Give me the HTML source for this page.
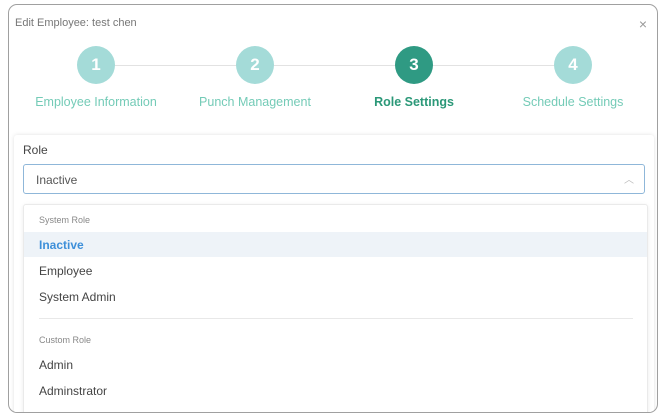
<!DOCTYPE html>
<html><head><style>
*{margin:0;padding:0;box-sizing:border-box}
body{width:667px;height:418px;background:#fff;font-family:"Liberation Sans",sans-serif;position:relative;overflow:hidden}
.dlg{position:absolute;left:8px;top:4px;width:650px;height:409px;border:1.5px solid #a0a0a0;border-radius:9px;background:#fff;overflow:hidden}
.t{position:absolute;left:6px;top:12px;font-size:11px;color:#777}
.x{position:absolute;right:10px;top:11px;font-size:14px;color:#999}
.line{position:absolute;top:60px;height:1px;background:#e2e2e2}
.c{position:absolute;top:41px;width:38px;height:38px;border-radius:50%;background:#a4dbd8;color:#fff;font-size:17px;font-weight:bold;text-align:center;line-height:38px}
.c.a{background:#2f9a83}
.l{position:absolute;top:90px;width:160px;text-align:center;font-size:12.5px;color:#74cbb7}
.l.a{color:#2b9878;font-weight:bold}
.card{position:absolute;left:5px;top:130px;width:640px;height:290px;background:#fff;box-shadow:0 0 4px rgba(0,0,0,.12);border-radius:3px}
.role{position:absolute;left:14px;top:138px;font-size:12px;color:#444}
.inp{position:absolute;left:14px;top:159px;width:622px;height:30px;border:1px solid #8fb7d9;border-radius:3px;font-size:12px;color:#555;padding:8px 12px}
.inp span{position:absolute;right:10px;top:6px;color:#bbb;font-size:10px}
.dd{position:absolute;left:14px;top:199px;width:625px;height:220px;background:#fff;border:1px solid #eaeaea;border-radius:3px;box-shadow:0 1px 4px rgba(0,0,0,.08)}
.g{position:absolute;left:15px;font-size:9px;color:#888}
.i{position:absolute;left:15px;font-size:12px;color:#444}
.hl{position:absolute;left:0;top:27px;width:100%;height:25px;background:#eef3f8}
</style></head><body>
<div class="dlg">
<div class="t">Edit Employee: test chen</div>
<div class="x">×</div>
<div class="line" style="left:87px;width:478px"></div>
<div class="c" style="left:68px">1</div>
<div class="c" style="left:227px">2</div>
<div class="c a" style="left:386px">3</div>
<div class="c" style="left:545px">4</div>
<div class="l" style="left:7px">Employee Information</div>
<div class="l" style="left:166px">Punch Management</div>
<div class="l a" style="left:325px">Role Settings</div>
<div class="l" style="left:484px">Schedule Settings</div>
<div class="card"></div>
<div class="role">Role</div>
<div class="inp">Inactive<span>︿</span></div>
<div class="dd">
<div class="g" style="top:10px">System Role</div>
<div class="hl"></div>
<div class="i" style="top:33px;color:#3d8fd9;font-weight:bold">Inactive</div>
<div class="i" style="top:59px">Employee</div>
<div class="i" style="top:85px">System Admin</div>
<div style="position:absolute;left:15px;top:113px;width:594px;height:1px;background:#e8e8e8"></div>
<div class="g" style="top:130px">Custom Role</div>
<div class="i" style="top:153px">Admin</div>
<div class="i" style="top:179px">Adminstrator</div>
<div class="i" style="top:205px">Cashier</div>
</div>
</div>
</body></html>
